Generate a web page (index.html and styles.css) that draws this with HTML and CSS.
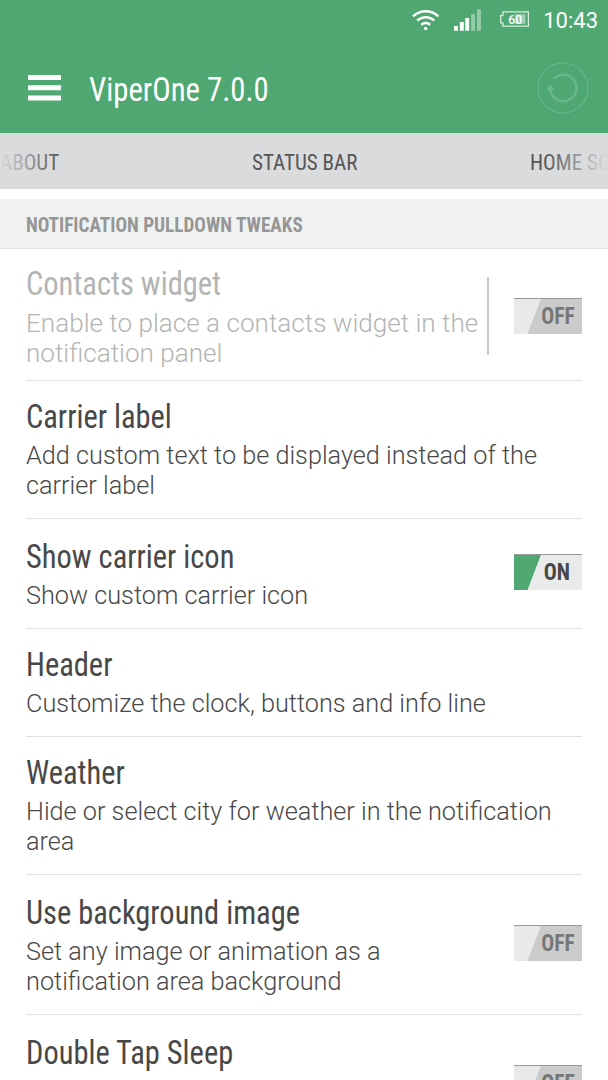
FILE: index.html
```html
<!DOCTYPE html>
<html lang="en">
<head>
    <meta charset="UTF-8">
    <meta name="viewport" content="width=device-width, initial-scale=1.0">
    <title>ViperOne 7.0.0</title>
    <link rel="stylesheet" href="styles.css">
</head>
<body>
<header class="top">
    <div class="status-icons">
        <svg class="wifi" width="28" height="22" viewBox="0 0 28 22" fill="none" stroke="#fff" stroke-width="2.5">
            <path d="M1 7.4a18.4 18.4 0 0 1 26 0M5.3 11.7a12.3 12.3 0 0 1 17.4 0M9.5 15.9a6.4 6.4 0 0 1 9 0"/>
            <circle cx="14" cy="19.6" r="1.8" fill="#fff" stroke="none"/>
        </svg>
        <svg class="signal" width="28" height="22" viewBox="0 0 28 22" fill="#fff">
            <path d="M0 17h4v5H0zM6 13h4v9H6zM11.5 9h4v13h-4z"/>
            <path d="M17.5 5h4v17h-4zM23.5 0h4v22h-4z" opacity=".4"/>
        </svg>
        <svg class="battery" width="30" height="16" viewBox="0 0 30 16">
            <path d="M3 .7h26v14.6H3v-3.3H.7V4.5H3z" fill="none" stroke="#fff" stroke-opacity=".8" stroke-width="1.3"/>
            <path d="M15 3h11v10H15z" fill="#fff" opacity=".45"/>
            <text x="8.5" y="12.8" textLength="14" lengthAdjust="spacingAndGlyphs">60</text>
        </svg>
        <span class="clock">10:43</span>
    </div>
    <div class="title-bar">
        <svg class="menu" width="33" height="26" viewBox="0 0 33 26" fill="#fff">
            <path d="M0 0h33v5H0zM0 10.3h33v5H0zM0 20.6h33v5H0z"/>
        </svg>
        <h1>ViperOne 7.0.0</h1>
        <svg class="refresh" width="52" height="52" viewBox="0 0 52 52" fill="none" stroke="#6ab78a">
            <circle cx="26" cy="26" r="25" stroke-width="1.2"/>
            <path d="M16.8 16.8A13.2 13.2 0 1 1 13.4 28.5" stroke-width="2.6"/>
            <path d="M13.3 22.5l4.200 5.500h-7.500z" fill="#6ab78a"/>
        </svg>
    </div>
</header>

<nav class="tabs">
    <span class="about">ABOUT</span>
    <span class="current">STATUS BAR</span>
    <span class="home">HOME SCREEN</span>
</nav>

<div class="section">
    <h2>NOTIFICATION PULLDOWN TWEAKS</h2>
</div>

<main class="settings">
    <div class="row disabled">
        <div class="text">
            <h3>Contacts widget</h3>
            <p>Enable to place a contacts widget in the notification panel</p>
        </div>
        <div class="split"></div>
        <div class="toggle"><span>OFF</span></div>
    </div>
    <div class="row">
        <div class="text">
            <h3>Carrier label</h3>
            <p>Add custom text to be displayed instead of the carrier label</p>
        </div>
    </div>
    <div class="row switch">
        <div class="text">
            <h3>Show carrier icon</h3>
            <p>Show custom carrier icon</p>
        </div>
        <div class="toggle on"><span>ON</span></div>
    </div>
    <div class="row">
        <div class="text">
            <h3>Header</h3>
            <p>Customize the clock, buttons and info line</p>
        </div>
    </div>
    <div class="row">
        <div class="text">
            <h3>Weather</h3>
            <p>Hide or select city for weather in the notification area</p>
        </div>
    </div>
    <div class="row switch">
        <div class="text">
            <h3>Use background image</h3>
            <p>Set any image or animation as a notification area background</p>
        </div>
        <div class="toggle"><span>OFF</span></div>
    </div>
    <div class="row switch last">
        <div class="text">
            <h3>Double Tap Sleep</h3>
        </div>
        <div class="toggle"><span>OFF</span></div>
    </div>
</main>
</body>
</html>
```

FILE: styles.css
```css
* {
    box-sizing: border-box;
}
body {
    margin: 0;
    height: 1080px;
    overflow: hidden;
    font-family: Roboto, sans-serif;
    color: #484848;
    background: #fff;
}
h1, h2, h3, p {
    margin: 0;
}
h1, h2, h3, .tabs, .toggle {
    font-family: "Roboto Condensed", Roboto, sans-serif;
    font-stretch: 75%;
}
/* slightly narrower than the stock condensed face */
h1, h2, h3, .tabs span, .toggle span {
    transform: scaleX(.937);
    transform-origin: left;
}
.top {
    height: 133px;
    background: #4fa771;
    color: #fff;
}
.status-icons {
    display: flex;
    height: 40px;
    padding: 0 10px 0 412px;
}
.wifi {
    margin-top: 9px;
}
.signal {
    margin: 9px 0 0 15px;
}
.battery {
    margin: 11px 0 0 18px;
}
.battery text {
    font-size: 14px;
    font-weight: 500;
    fill: #fff;
}
.clock {
    margin-left: 14px;
    font-size: 22px;
    line-height: 41px;
}
.title-bar {
    display: flex;
    align-items: center;
    height: 94px;
    padding: 1px 19px 0 28px;
}
.title-bar h1 {
    flex: 1;
    margin-left: 28px;
    padding-top: 4px;
    font-size: 32.8px;
    font-weight: 400;
}
.tabs {
    display: flex;
    position: relative;
    height: 56px;
    overflow: hidden;
    background: #dadbdd;
    font-size: 22.5px;
    line-height: 59px;
    white-space: nowrap;
    color: #555;
}
.tabs span {
    flex: none;
}
.about {
    width: 252px;
}
.current {
    width: 278px;
}
.tabs::after {
    content: "";
    position: absolute;
    inset: 0;
    background: linear-gradient(90deg, #dadbdd, rgba(218, 219, 221, 0) 60px, rgba(218, 219, 221, 0) 545px, #dadbdd);
}
.section {
    height: 50px;
    margin-top: 10px;
    padding-left: 26px;
    border-bottom: 1px solid #dfe0e0;
    background: #f0f2f1;
}
h2 {
    font-size: 20.5px;
    line-height: 52px;
    color: #969696;
}
.row {
    display: flex;
    align-items: center;
    height: 138px;
    margin: 0 26px;
    padding-bottom: 2px;
    border-bottom: 1px solid #e2e2e2;
}
.row.disabled {
    height: 132px;
    padding: 2px 0 0;
    color: #b3b5b4;
}
.row:nth-child(3) {
    height: 110px;
}
.row:nth-child(4) {
    height: 108px;
}
.row.switch {
    padding-bottom: 1px;
}
.row:nth-child(6) {
    height: 140px;
}
.row.last {
    align-items: flex-start;
    height: 66px;
    padding-top: 17px;
    border: 0;
}
.row.switch .toggle {
    margin-bottom: 3px;
}
.row.last .toggle {
    margin-top: 33px;
}
.text {
    flex: 1;
}
.row.switch .text {
    padding-right: 80px;
}
h3 {
    margin-bottom: 3px;
    font-size: 32.5px;
    font-weight: 430;
    line-height: 42px;
}
p {
    font-size: 25.25px;
    font-weight: 300;
    line-height: 30px;
}
.disabled p {
    font-size: 26.1px;
}
.split {
    width: 2px;
    height: 78px;
    margin-right: 25px;
    background: #c8c8c8;
}
.toggle {
    flex: none;
    width: 68px;
    height: 36px;
    padding-right: 7px;
    border-top: 1px solid #999;
    background: linear-gradient(111deg, #e8eae9 32.5%, #cbcbcb 33.5%);
    font-size: 23px;
    font-weight: 700;
    line-height: 36px;
    text-align: right;
    color: #777;
}
.toggle span {
    display: inline-block;
    transform-origin: right;
}
.toggle.on {
    padding-right: 12px;
    background: linear-gradient(111deg, #4fa771 32.5%, #e9ebea 33.5%);
    color: #484848;
}
```
